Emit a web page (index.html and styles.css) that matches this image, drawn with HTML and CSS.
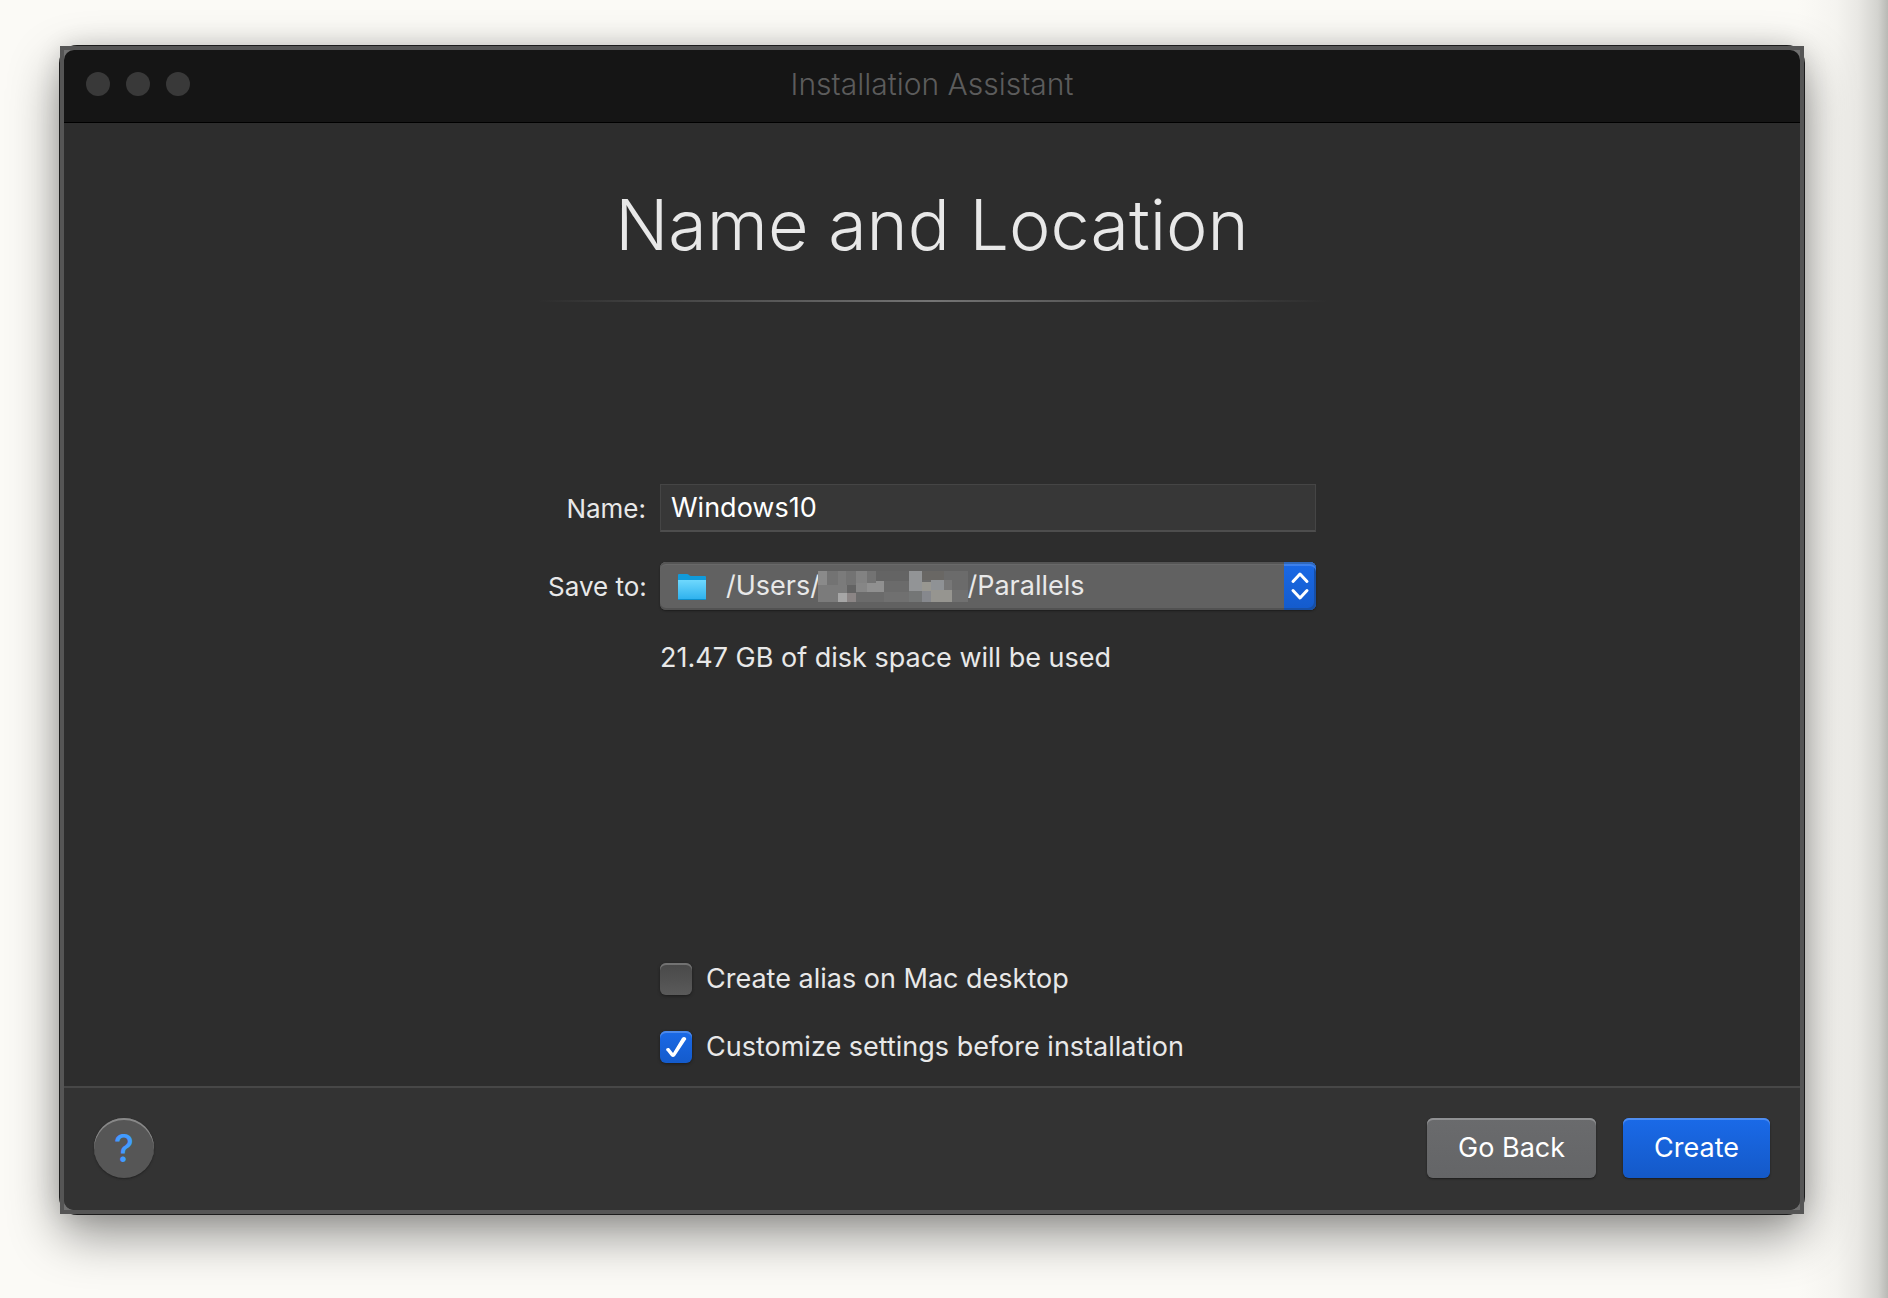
FILE: index.html
```html
<!DOCTYPE html>
<html lang="en">
<head>
<meta charset="utf-8">
<meta name="viewport" content="width=device-width, initial-scale=1">
<title>Installation Assistant</title>
<link rel="stylesheet" href="styles.css">
</head>
<body>
<main class="window">
  <header class="titlebar">
    <div class="lights"><span></span><span></span><span></span></div>
    <div class="titlebar-text">Installation Assistant</div>
  </header>
  <form class="assistant">
    <div class="content">
      <h1 class="heading">Name and Location</h1>
      <div class="divider"></div>
      <div class="fields">
        <label class="field-label" for="vm-name">Name:</label>
        <input class="text-field" id="vm-name" type="text" value="Windows10">
        <label class="field-label" for="save-to">Save to:</label>
        <div class="popup">
          <select class="popup-select" id="save-to">
            <option>/Users/&emsp;&emsp;&emsp;&emsp;&emsp;&thinsp;&nbsp;/Parallels</option>
          </select>
          <svg class="folder" viewBox="0 0 32 30" aria-hidden="true">
            <defs><linearGradient id="front" x1="0" y1="0" x2="0" y2="1"><stop offset="0" stop-color="#6fd8fd"/><stop offset="1" stop-color="#2fb2ee"/></linearGradient></defs>
            <path d="M2 3q0-1 1-1h8q1 0 2 1t2 1h14q1 0 1 1v22q0 1-1 1H3q-1 0-1-1z" fill="#109bdb"/>
            <path d="M2 8h28v19H2z" fill="url(#front)"/>
            <path d="M2 27h28q0 1-1 1H3q-1 0-1-1z" fill="#0c8fcc"/>
          </svg>
          <svg class="redaction" viewBox="0 0 150 31" shape-rendering="crispEdges" aria-hidden="true">
            <path d="M0 0h150v31H0z" fill="#6b6b6b"/>
            <path d="M0 0h9v14H0z" fill="#8a8a8a"/>
            <path d="M9 0h11v14H9zM28 0h10v14H28zM49 0h9v12H49z" fill="#737373"/>
            <path d="M20 0h8v14h-8zM0 14h29v17H0z" fill="#7b7b7b"/>
            <path d="M38 0h11v12H38z" fill="#828282"/>
            <path d="M58 0h33v10H58z" fill="#646464"/>
            <path d="M29 14h9v8h-9z" fill="#636363"/>
            <path d="M38 12h11v9H38z" fill="#868686"/>
            <path d="M49 12h9v9h-9zM58 10h8v11h-8z" fill="#909090"/>
            <path d="M20 22h9v9h-9z" fill="#a6a6a6"/>
            <path d="M29 22h9v9h-9z" fill="#8b8585"/>
            <path d="M66 21h25v10H66z" fill="#707070"/>
            <path d="M91 0h13v20H91z" fill="#929496"/>
            <path d="M104 0h22v9h-22z" fill="#696764"/>
            <path d="M104 11h9v9h-9z" fill="#989791"/>
            <path d="M113 9h13v10h-13z" fill="#8f9295"/>
            <path d="M126 9h8v10h-8z" fill="#777"/>
            <path d="M91 20h13v11H91z" fill="#747676"/>
            <path d="M104 20h9v11h-9z" fill="#86888d"/>
            <path d="M113 19h21v12h-21z" fill="#969590"/>
            <path d="M134 19h16v12h-16z" fill="#707070"/>
          </svg>
          <span class="stepper" aria-hidden="true"><svg viewBox="0 0 32 48"><path d="M9 19.500l7-7.500 7 7.500M9 28.500l7 7.500 7-7.500"/></svg></span>
        </div>
        <p class="hint">21.47 GB of disk space will be used</p>
        <div class="options">
          <label class="option"><input class="checkbox" type="checkbox">Create alias on Mac desktop</label>
          <label class="option"><input class="checkbox" type="checkbox" checked>Customize settings before installation</label>
        </div>
      </div>
    </div>
    <footer class="footer">
      <button class="help" type="button" aria-label="Help">?</button>
      <button class="button button-back" type="button">Go Back</button>
      <button class="button button-create" type="submit">Create</button>
    </footer>
  </form>
</main>
</body>
</html>
```

FILE: styles.css
```css
* { box-sizing: border-box; }

body {
  margin: 0;
  min-height: 100vh;
  display: flex;
  isolation: isolate;
  padding: 46px 84px 84px 60px;
  background: linear-gradient(to left, #b9b9b5 0, #d3d3cf 10px, #e9e8e4 30px, #f5f4f0 52px, #fbfaf6 90px);
  color: #e8e8e8;
  font-family: Inter, "Liberation Sans", sans-serif;
  font-size: 27px;
}

.window {
  position: relative;
  flex: 1;
  display: flex;
  flex-direction: column;
  border: 4px solid #555;
  background: #707070;
}

/* Drop shadow and hairline, rounder than the square frame above them */
.window::before {
  content: "";
  position: absolute;
  z-index: -1;
  inset: -5px;
  border-radius: 18px;
  background: #1c1c1c;
  box-shadow: 0 20px 50px rgba(0, 0, 0, .42), 0 0 24px rgba(0, 0, 0, .12);
}

.titlebar {
  display: grid;
  grid-template-columns: 1fr auto 1fr;
  align-items: center;
  height: 73px;
  padding: 0 22px 4px;
  border-radius: 10px 10px 0 0;
  background: #151515;
  border-bottom: 1px solid #000;
}

.lights { display: flex; gap: 16px; }
.lights span { width: 24px; height: 24px; border-radius: 50%; background: #393939; }

.titlebar-text {
  font-size: 30px;
  font-weight: 300;
  color: #5c5c5c;
}

.assistant {
  flex: 1;
  display: flex;
  flex-direction: column;
  border-radius: 0 0 10px 10px;
  background: #2d2d2d;
}

.content {
  flex: 1;
  display: flex;
  flex-direction: column;
  align-items: center;
  padding-bottom: 22px;
}

.heading {
  margin: 59px 0 33px;
  font-size: 70px;
  line-height: 85px;
  font-weight: 300;
}

.divider {
  width: 100%;
  max-width: 790px;
  height: 2px;
  background: linear-gradient(to right, transparent, #747474 50%, transparent);
}

.fields {
  flex: 1;
  display: grid;
  grid-template-columns: 98px 656px;
  grid-template-rows: auto auto auto 1fr;
  gap: 30px 14px;
  align-items: center;
  padding-top: 182px;
}

.field-label { text-align: right; font-size: 26px; white-space: nowrap; }

.text-field {
  width: 100%;
  height: 48px;
  padding: 0 10px;
  border: 1px solid #454545;
  border-bottom: 2px solid #4d4d4d;
  background: #373737;
  color: #fff;
  font: inherit;
}

.popup { position: relative; height: 48px; }

.popup-select {
  appearance: none;
  width: 100%;
  height: 48px;
  padding: 0 40px 2px 66px;
  border: 0;
  border-radius: 6px;
  background: #616161;
  box-shadow: inset 0 2px #555, inset 0 3px #696969, inset 0 -2px #525252, 0 1px 2px #1c1c1c;
  color: #e8e8e8;
  font: inherit;
}

.folder { position: absolute; left: 16px; top: 10px; width: 32px; height: 30px; pointer-events: none; }
.redaction { position: absolute; left: 158px; top: 9px; width: 150px; height: 31px; pointer-events: none; }

.stepper {
  position: absolute;
  right: 0;
  top: 0;
  width: 32px;
  height: 48px;
  border-radius: 0 6px 6px 0;
  background: linear-gradient(#1a69e6, #145bcc);
  box-shadow: inset 0 2px #2f67b9, inset 0 4px #3d80eb, inset -2px -2px #174fa5;
  pointer-events: none;
}
.stepper svg { display: block; fill: none; stroke: #fff; stroke-width: 3; stroke-linecap: round; stroke-linejoin: round; }

.hint { grid-column: 2; margin: 0; line-height: 36px; }

.options { grid-column: 2; align-self: end; display: flex; flex-direction: column; gap: 34px; }
.option { display: flex; align-items: center; gap: 14px; line-height: 36px; height: 34px; }

.checkbox {
  appearance: none;
  display: grid;
  width: 32px;
  height: 32px;
  margin: 0;
  border-radius: 6px;
  background: linear-gradient(#484848, #5a5a5a);
  box-shadow: inset 0 2px #727272, 0 1px 3px #1c1c1c;
}
.checkbox:checked {
  background: linear-gradient(#1a69e6, #145bcc);
  box-shadow: inset 0 2px #4b89ec, 0 1px 3px #1c1c1c;
}
.checkbox:checked::before {
  content: "";
  background: #fff;
  clip-path: path("M6 19Q6 17 8 17L9 17L13 22L22 7Q24 5 26 7Q27 8 25 10L15 25Q13 27 11 25L7 20Z");
}

.footer {
  display: flex;
  align-items: center;
  gap: 27px;
  height: 124px;
  padding: 0 30px;
  border-radius: 0 0 10px 10px;
  background: linear-gradient(#474747 2px, #333 2px);
}

.help {
  width: 60px;
  height: 60px;
  margin-right: auto;
  padding: 0;
  border: 0;
  border-radius: 50%;
  background: #565656;
  box-shadow: inset 0 2px #888, 0 1px 2px #222;
  color: #429bff;
  font: 500 38px/60px Inter, sans-serif;
}

.button {
  height: 60px;
  padding: 0 31px 2px;
  border: 0;
  border-radius: 6px;
  color: #fff;
  font: inherit;
}
.button-back { background: linear-gradient(#6a6b6d, #646567); box-shadow: inset 0 2px #909193, 0 1px 2px #1c1c1c; }
.button-create { background: linear-gradient(#1a6ae8, #1459c8); box-shadow: inset 0 2px #4f8df0, 0 1px 2px #1c1c1c; }
```
